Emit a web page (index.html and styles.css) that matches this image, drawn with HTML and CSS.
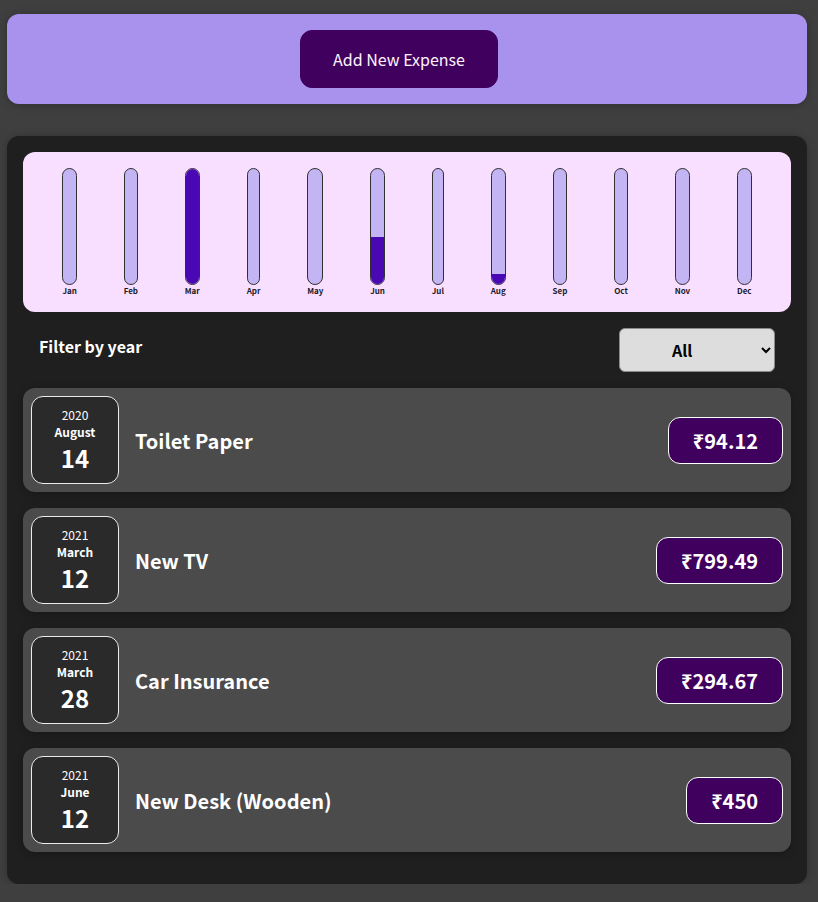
FILE: index.html
```html
<!DOCTYPE html>
<html lang="en">
<head>
<meta charset="utf-8">
<title>Expense Tracker</title>
<link rel="stylesheet" href="styles.css">
</head>
<body>
<div class="app">
  <div class="new-expense card">
    <button class="new-expense__btn" type="button">Add New Expense</button>
  </div>

  <div class="expenses card">
    <div class="chart">
      <div class="chart-bar"><div class="chart-bar__inner"><div class="chart-bar__fill" style="height:0%"></div></div><div class="chart-bar__label">Jan</div></div>
      <div class="chart-bar"><div class="chart-bar__inner"><div class="chart-bar__fill" style="height:0%"></div></div><div class="chart-bar__label">Feb</div></div>
      <div class="chart-bar"><div class="chart-bar__inner"><div class="chart-bar__fill" style="height:100%"></div></div><div class="chart-bar__label">Mar</div></div>
      <div class="chart-bar"><div class="chart-bar__inner"><div class="chart-bar__fill" style="height:0%"></div></div><div class="chart-bar__label">Apr</div></div>
      <div class="chart-bar"><div class="chart-bar__inner"><div class="chart-bar__fill" style="height:0%"></div></div><div class="chart-bar__label">May</div></div>
      <div class="chart-bar"><div class="chart-bar__inner"><div class="chart-bar__fill" style="height:41%"></div></div><div class="chart-bar__label">Jun</div></div>
      <div class="chart-bar"><div class="chart-bar__inner"><div class="chart-bar__fill" style="height:0%"></div></div><div class="chart-bar__label">Jul</div></div>
      <div class="chart-bar"><div class="chart-bar__inner"><div class="chart-bar__fill" style="height:9%"></div></div><div class="chart-bar__label">Aug</div></div>
      <div class="chart-bar"><div class="chart-bar__inner"><div class="chart-bar__fill" style="height:0%"></div></div><div class="chart-bar__label">Sep</div></div>
      <div class="chart-bar"><div class="chart-bar__inner"><div class="chart-bar__fill" style="height:0%"></div></div><div class="chart-bar__label">Oct</div></div>
      <div class="chart-bar"><div class="chart-bar__inner"><div class="chart-bar__fill" style="height:0%"></div></div><div class="chart-bar__label">Nov</div></div>
      <div class="chart-bar"><div class="chart-bar__inner"><div class="chart-bar__fill" style="height:0%"></div></div><div class="chart-bar__label">Dec</div></div>
    </div>

    <div class="expenses-filter">
      <div class="expenses-filter__control">
        <label class="expenses-filter__label" for="year">Filter by year</label>
        <select id="year" class="expenses-filter__select">
          <option>All</option>
          <option>2022</option>
          <option>2021</option>
          <option>2020</option>
          <option>2019</option>
        </select>
      </div>
    </div>

    <ul class="expenses-list">
      <li class="expense-item">
        <div class="expense-date">
          <div class="expense-date__year">2020</div>
          <div class="expense-date__month">August</div>
          <div class="expense-date__day">14</div>
        </div>
        <div class="expense-item__description">
          <h2 class="expense-item__title">Toilet Paper</h2>
          <div class="expense-item__price">₹94.12</div>
        </div>
      </li>
      <li class="expense-item">
        <div class="expense-date">
          <div class="expense-date__year">2021</div>
          <div class="expense-date__month">March</div>
          <div class="expense-date__day">12</div>
        </div>
        <div class="expense-item__description">
          <h2 class="expense-item__title">New TV</h2>
          <div class="expense-item__price">₹799.49</div>
        </div>
      </li>
      <li class="expense-item">
        <div class="expense-date">
          <div class="expense-date__year">2021</div>
          <div class="expense-date__month">March</div>
          <div class="expense-date__day">28</div>
        </div>
        <div class="expense-item__description">
          <h2 class="expense-item__title">Car Insurance</h2>
          <div class="expense-item__price">₹294.67</div>
        </div>
      </li>
      <li class="expense-item">
        <div class="expense-date">
          <div class="expense-date__year">2021</div>
          <div class="expense-date__month">June</div>
          <div class="expense-date__day">12</div>
        </div>
        <div class="expense-item__description">
          <h2 class="expense-item__title">New Desk (Wooden)</h2>
          <div class="expense-item__price">₹450</div>
        </div>
      </li>
    </ul>
  </div>
</div>
</body>
</html>
```

FILE: styles.css
```css
* {
  box-sizing: border-box;
}

html {
  font-family: "Noto Sans CJK JP", "Noto Sans", sans-serif;
}

body {
  margin: 0;
  background-color: #3f3f3f;
  overflow: hidden;
}

.app {
  padding: 14px 0 0 7px;
}

.card {
  border-radius: 12px;
  box-shadow: 0 1px 8px rgba(0, 0, 0, 0.25);
}

.new-expense {
  background-color: #a892ee;
  padding: 16px;
  width: 800px;
  text-align: center;
}

.new-expense__btn {
  font: inherit;
  cursor: pointer;
  padding: 16px 32px;
  border: 1px solid #40005d;
  background-color: #40005d;
  color: #fdf4ff;
  border-radius: 12px;
  margin-right: 16px;
}

.expenses {
  margin-top: 32px;
  padding: 16px 16px 32px;
  background-color: rgb(31, 31, 31);
  width: 800px;
}

.chart {
  padding: 16px;
  border-radius: 12px;
  background-color: #f8dfff;
  text-align: center;
  display: flex;
  justify-content: space-around;
  height: 160px;
}

.chart-bar {
  height: 100%;
  display: flex;
  flex-direction: column;
  align-items: center;
}

.chart-bar__inner {
  height: 100%;
  width: 100%;
  border: 1px solid #313131;
  border-radius: 12px;
  background-color: #c3b4f3;
  overflow: hidden;
  display: flex;
  flex-direction: column;
  justify-content: flex-end;
}

.chart-bar__fill {
  background-color: #4a08b5;
  width: 100%;
}

.chart-bar__label {
  font-weight: bold;
  font-size: 8px;
  text-align: center;
  color: #1a1a2a;
}

.expenses-filter {
  color: white;
  padding: 0 16px;
}

.expenses-filter__control {
  display: flex;
  width: 100%;
  align-items: center;
  justify-content: space-between;
  margin: 16px 0;
}

.expenses-filter__label {
  font-weight: bold;
  margin-bottom: 8px;
}

.expenses-filter__select {
  font: inherit;
  font-weight: bold;
  padding: 8px 48px;
  border-radius: 6px;
  background-color: #dddddd;
  border: 1px solid #8a8a8a;
  color: #000;
  height: 44px;
}

.expenses-list {
  list-style: none;
  padding: 0;
  margin: 0;
}

.expense-item {
  display: flex;
  justify-content: space-between;
  align-items: center;
  box-shadow: 0 2px 8px rgba(0, 0, 0, 0.25);
  padding: 8px;
  margin-top: 16px;
  border-radius: 12px;
  background-color: #4b4b4b;
}

.expense-item__description {
  display: flex;
  flex-direction: row;
  align-items: center;
  justify-content: flex-start;
  flex: 1;
}

.expense-item__title {
  font-size: 20px;
  flex: 1;
  margin: 0 16px;
  color: white;
}

.expense-item__price {
  font-size: 20px;
  font-weight: bold;
  color: white;
  background-color: #40005d;
  border: 1px solid white;
  padding: 8px 24px;
  border-radius: 12px;
}

.expense-date {
  display: flex;
  flex-direction: column;
  width: 88px;
  height: 88px;
  border: 1px solid #ececec;
  background-color: #2a2a2a;
  color: white;
  border-radius: 12px;
  align-items: center;
  justify-content: center;
}

.expense-date__month {
  font-size: 12px;
  font-weight: bold;
}

.expense-date__year {
  font-size: 12px;
}

.expense-date__day {
  font-size: 24px;
  font-weight: bold;
}
```
